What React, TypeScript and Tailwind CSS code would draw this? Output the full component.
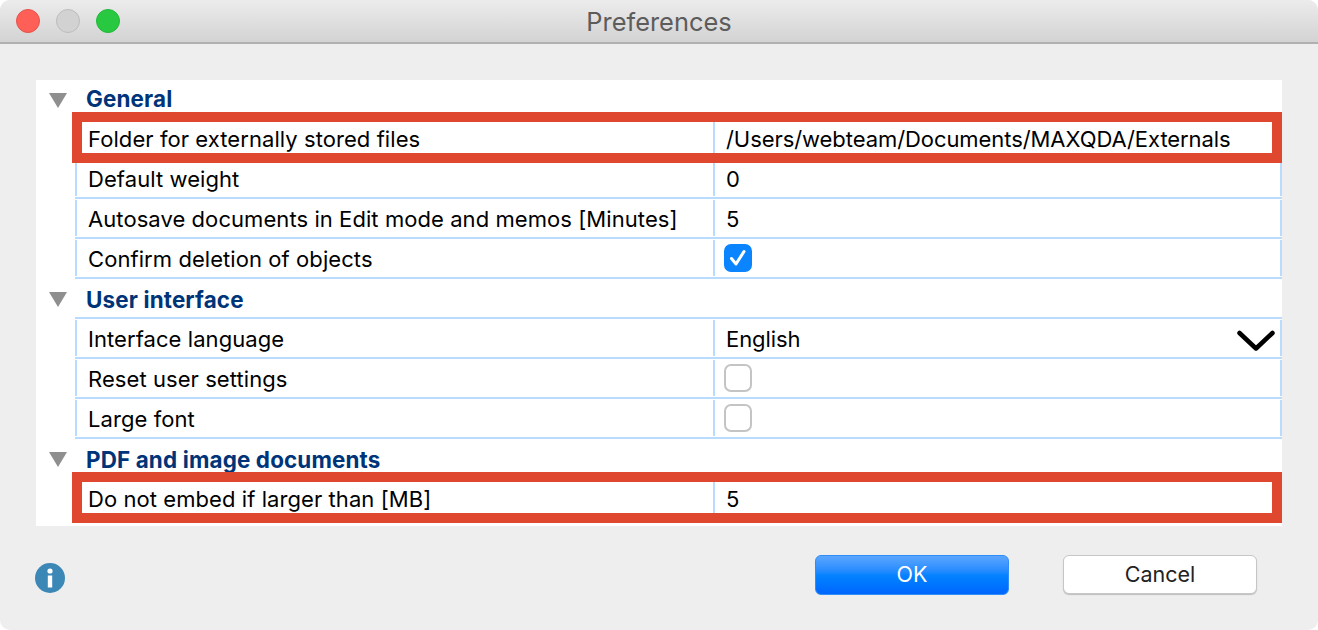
import React from "react";

const font = { fontFamily: "Inter, 'Liberation Sans', sans-serif" };

function Triangle() {
  return (
    <svg width="18" height="15" viewBox="0 0 18 15" className="absolute left-[13px] top-[13px]">
      <polygon points="0,0 18,0 9,15" fill="#8f8f8f" />
    </svg>
  );
}

function Header({ title, h }: { title: string; h: string }) {
  return (
    <div className={`relative flex items-center pl-[50px] ${h}`}>
      <Triangle />
      <span className="text-[22.4px] font-bold leading-none tracking-[0.15px] text-[#003478]">{title}</span>
    </div>
  );
}

function Check({ on }: { on?: boolean }) {
  if (on) {
    return (
      <div className="-ml-[2px] -mt-[1px] flex h-[28px] w-[28px] items-center justify-center rounded-[7px] bg-[#0a84ff]">
        <svg width="20" height="20" viewBox="0 0 20 20" fill="none">
          <path d="M3.5 10.5 L8 16 L16 3.5" stroke="#fff" strokeWidth="3" strokeLinecap="round" strokeLinejoin="round" />
        </svg>
      </div>
    );
  }
  return <div className="-ml-[2px] -mt-[1px] h-[28px] w-[28px] rounded-[7px] border-2 border-[#c4c4c4] bg-white" />;
}

function Row({ label, children, red, last }: { label: string; children: React.ReactNode; red?: boolean; last?: boolean }) {
  return (
    <div className={`relative ml-[39px] flex border-t-2 border-[#b8dbff] ${last ? "h-[42px] border-b-2" : "h-10"}`}>
      <div className="my-px flex w-[638px] items-center border-l-2 border-[#b8dbff] pl-[11px] pt-px tracking-[0.07px]">
        <span>{label}</span>
      </div>
      <div className="my-px flex flex-1 items-center border-x-2 border-[#b8dbff] pl-[11px] pt-px tracking-[-0.07px]">{children}</div>
      {red && (
        <div className="absolute left-[-3px] right-0 top-[-7px] z-10 h-[51px] border-[10px] border-[#df472e]" />
      )}
    </div>
  );
}

export default function App() {
  return (
    <div className="h-[630px] w-[1318px] bg-white text-[22px] leading-none text-black" style={font}>
      <div className="flex h-full flex-col overflow-hidden rounded-[10px] bg-[#eeeeee]">
        <div className="flex h-[44px] shrink-0 items-center border-b-2 border-[#b0b0b0] bg-gradient-to-b from-[#ececec] to-[#d3d3d3] pl-4">
          <div className="flex w-[104px] shrink-0 gap-4">
            <span className="h-6 w-6 rounded-full border border-[#e5534b] bg-[#fe5f57]" />
            <span className="h-6 w-6 rounded-full border border-[#bcbcbc] bg-[#d2d2d2]" />
            <span className="h-6 w-6 rounded-full border border-[#22b83a] bg-[#28c940]" />
          </div>
          <div className="ml-[-120px] w-[1318px] shrink-0 pt-[2px] text-center text-[25.4px] text-[#5c5c5c]">Preferences</div>
        </div>

        <div className="mx-[36px] mt-[36px] h-[446px] shrink-0 bg-white">
          <Header title="General" h="h-[37px] pt-[2px]" />
          <Row label="Folder for externally stored files" red>
            /Users/webteam/Documents/MAXQDA/Externals
          </Row>
          <Row label="Default weight">0</Row>
          <Row label="Autosave documents in Edit mode and memos [Minutes]">5</Row>
          <Row label="Confirm deletion of objects" last>
            <Check on />
          </Row>
          <Header title="User interface" h="h-[38px] pt-[4px]" />
          <Row label="Interface language">
            <div className="flex flex-1 items-center justify-between pr-[5px]">
              <span>English</span>
              <svg width="38" height="22" viewBox="0 0 38 22" fill="none" className="mt-[4px]">
                <path d="M2.5 3 L19 18.5 L35.5 3" stroke="#000" strokeWidth="4.5" strokeLinecap="round" strokeLinejoin="round" />
              </svg>
            </div>
          </Row>
          <Row label="Reset user settings">
            <Check />
          </Row>
          <Row label="Large font" last>
            <Check />
          </Row>
          <Header title="PDF and image documents" h="h-[38px] pt-[4px]" />
          <Row label="Do not embed if larger than [MB]" red last>
            5
          </Row>
        </div>

        <div className="mx-[36px] mt-[29px] flex items-start">
          <svg width="30" height="30" viewBox="0 0 30 30" className="-ml-px mt-[8px]">
            <circle cx="15" cy="15" r="15" fill="#3b87b6" />
            <circle cx="15" cy="8" r="2.6" fill="#fff" />
            <rect x="12.8" y="12.5" width="4.4" height="12" fill="#fff" />
          </svg>
          <div className="ml-auto flex gap-[54px] pr-[25px]">
            <button className="h-10 w-[194px] rounded-[6px] border border-[#2f8ef5] bg-gradient-to-b from-[#5ba6ff] via-[#0583ff] to-[#0066ff] text-[21.5px] text-white">
              OK
            </button>
            <button className="h-[39px] w-[194px] rounded-[6px] border border-[#c6c6c6] bg-white text-[21.5px] text-[#222] shadow-[0_1px_1px_rgba(0,0,0,0.2)]">
              Cancel
            </button>
          </div>
        </div>
      </div>
    </div>
  );
}
